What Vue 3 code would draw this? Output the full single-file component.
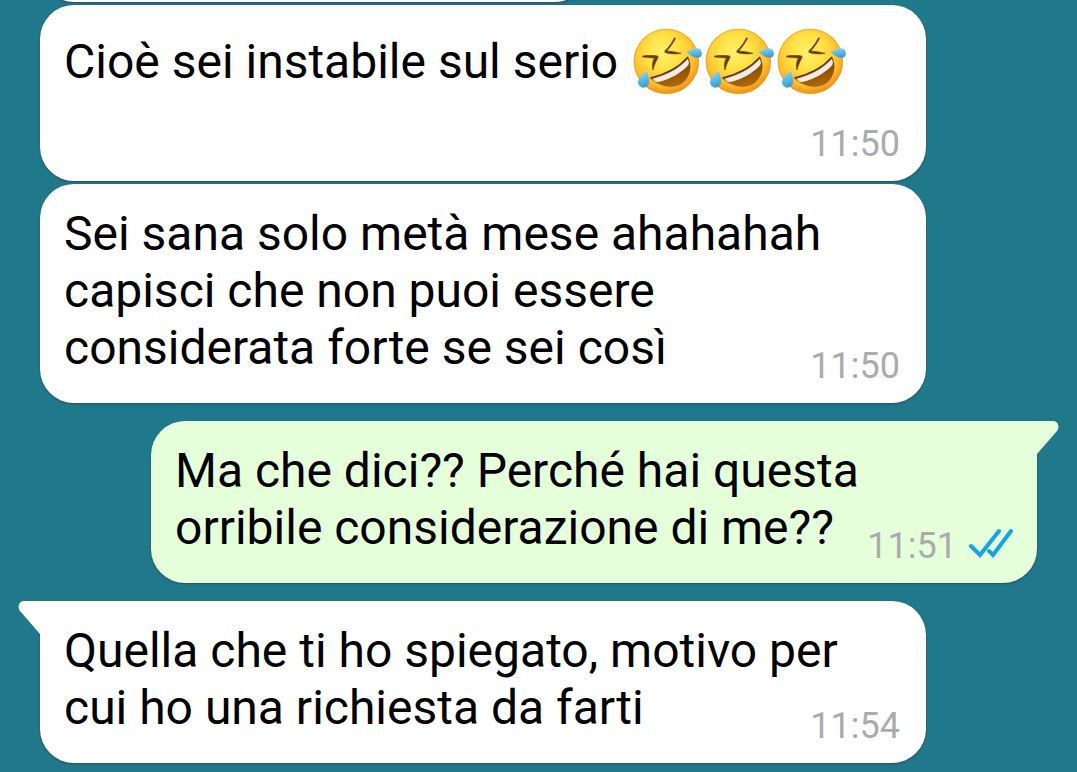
<script setup>
const messages = [
  { id: 1, side: 'in', lines: ['Cioè sei instabile sul serio'], emojis: 3, time: '11:50' },
  { id: 2, side: 'in', lines: ['Sei sana solo metà mese ahahahah', 'capisci che non puoi essere', 'considerata forte se sei così'], time: '11:50' },
  { id: 3, side: 'out', tail: true, lines: ['Ma che dici?? Perché hai questa', 'orribile considerazione di me??'], time: '11:51', read: true },
  { id: 4, side: 'in', tail: true, lines: ['Quella che ti ho spiegato, motivo per', 'cui ho una richiesta da farti'], time: '11:54' },
]
</script>

<template>
  <main class="chat">
    <svg class="defs" aria-hidden="true">
      <defs>
        <radialGradient id="face" cx="0.45" cy="0.36" r="0.68">
          <stop offset="0" stop-color="#fff26a" />
          <stop offset="0.4" stop-color="#ffe043" />
          <stop offset="0.75" stop-color="#fdb92a" />
          <stop offset="1" stop-color="#e98612" />
        </radialGradient>
        <linearGradient id="mouth" x1="0" y1="0" x2="0.3" y2="1">
          <stop offset="0" stop-color="#5f3105" />
          <stop offset="1" stop-color="#a96508" />
        </linearGradient>
        <linearGradient id="tear" x1="0" y1="0" x2="0.3" y2="1">
          <stop offset="0" stop-color="#8fdcf6" />
          <stop offset="1" stop-color="#389fd2" />
        </linearGradient>
        <symbol id="rofl" viewBox="3 6 216 216">
          <circle cx="109" cy="112" r="98" fill="url(#face)" />
          <circle cx="109" cy="112" r="96" fill="none" stroke="#e99a1c" stroke-opacity="0.5" stroke-width="4" />
          <path d="M137 42 C130 56 121 70 110 81 C124 82 138 84 153 88 C140 91 122 90 106 86 C103 84 104 81 107 78 C118 68 127 54 133 42Z" fill="#6e3c08" stroke="#6e3c08" stroke-width="2" />
          <path d="M38 96 C53 94 68 94 83 96 C85 99 84 102 82 105 C76 115 72 126 69 138 C66 126 67 112 73 102 C62 101 50 100 38 99Z" fill="#6e3c08" stroke="#6e3c08" stroke-width="2" />
          <path d="M61 162 C105 152 145 132 174 99 C188 123 182 158 158 177 C128 198 84 187 61 162Z" fill="url(#mouth)" />
          <path d="M68 164 C109 154 146 135 173 105 C178 113 178 120 173 125 C150 149 119 166 84 174 C77 174 71 170 68 164Z" fill="#f0ebe6" />
          <path d="M61 162 C105 152 145 132 174 99" fill="none" stroke="#63390a" stroke-width="4" />
          <path d="M170 83 C182 80 188 72 201 73 C213 74 219 86 214 95 C207 106 188 103 170 83Z" fill="url(#tear)" />
          <path d="M52 144 C36 148 24 159 24 175 C24 190 44 198 54 184 C60 175 57 163 52 144Z" fill="url(#tear)" />
        </symbol>
      </defs>
    </svg>

    <div class="bubble in previous"></div>

    <article
      v-for="m in messages"
      :key="m.id"
      class="bubble"
      :class="[m.side, { tailed: m.tail, stacked: m.emojis }]"
    >
      <svg v-if="m.tail" class="tail" viewBox="0 0 24 36" aria-hidden="true">
        <path d="M0 0 H17 C22 0 24 6 21 10 L1 33 H0Z" fill="currentColor" />
      </svg>
      <div class="text">
        <p v-for="(line, i) in m.lines" :key="i" class="line">
          <span>{{ line }}</span>
          <span v-if="m.emojis" class="emojis">
            <svg v-for="n in m.emojis" :key="n" class="emoji" role="img" aria-label="🤣"><use href="#rofl" /></svg>
          </span>
        </p>
      </div>
      <footer class="meta">
        <time>{{ m.time }}</time>
        <svg v-if="m.read" class="ticks" viewBox="0 0 46 30" aria-hidden="true">
          <path d="M3 18 L12 27 L31 3 M21 23 L25 27 L43 3" />
        </svg>
      </footer>
    </article>
  </main>
</template>

<style>
body {
  margin: 0;
  background: #20798a;
}
</style>

<style scoped>
.chat {
  box-sizing: border-box;
  min-height: 100vh;
  padding-bottom: 9px;
  overflow: hidden;
  display: flex;
  flex-direction: column;
  background: #20798a;
  font-family: Roboto, "Liberation Sans", sans-serif;
}
.defs {
  position: absolute;
  width: 0;
  height: 0;
}
.bubble {
  position: relative;
  display: grid;
  padding: 21px 26px 16px 24px;
  margin-top: 3px;
  border-radius: 34px;
  box-shadow: 0 1px 2px rgba(40, 50, 65, 0.6);
}
.in {
  margin-left: 40px;
  margin-right: 151px;
  background: #fff;
  color: #fff;
}
.out {
  margin-left: 151px;
  margin-right: 40px;
  padding-right: 23px;
  background: #e5ffdb;
  color: #e5ffdb;
}
.tailed {
  margin-top: 18px;
}
.in.tailed {
  border-top-left-radius: 0;
}
.out.tailed {
  border-top-right-radius: 0;
}
.previous {
  align-self: flex-start;
  box-sizing: border-box;
  width: 51%;
  height: 80px;
  margin-top: -78px;
}
.tail {
  position: absolute;
  top: 0;
  left: calc(100% - 1px);
  width: 24px;
  height: 36px;
}
.in .tail {
  left: auto;
  right: calc(100% - 1px);
  transform: scaleX(-1);
}
.text {
  grid-area: 1 / 1;
  padding-bottom: 11px;
  font-size: 48px;
  line-height: 57px;
  color: #000;
}
.line {
  margin: 0;
}
.emojis {
  display: inline-flex;
  margin-left: 13px;
  vertical-align: -20px;
}
.line:has(.emojis) {
  white-space: nowrap;
}
.emoji {
  width: 72px;
  height: 72px;
}
.meta {
  grid-area: 1 / 1;
  align-self: end;
  justify-self: end;
  display: flex;
  align-items: center;
  gap: 11px;
  font-size: 36px;
  line-height: 42px;
  color: #a9abae;
}
.stacked .text {
  padding-bottom: 25px;
}
.stacked .meta {
  grid-area: 2 / 1;
}
.ticks {
  width: 46px;
  height: 30px;
  margin-bottom: 6px;
  fill: none;
  stroke: #16a4e2;
  stroke-width: 4;
  stroke-linecap: round;
  stroke-linejoin: miter;
}
</style>
